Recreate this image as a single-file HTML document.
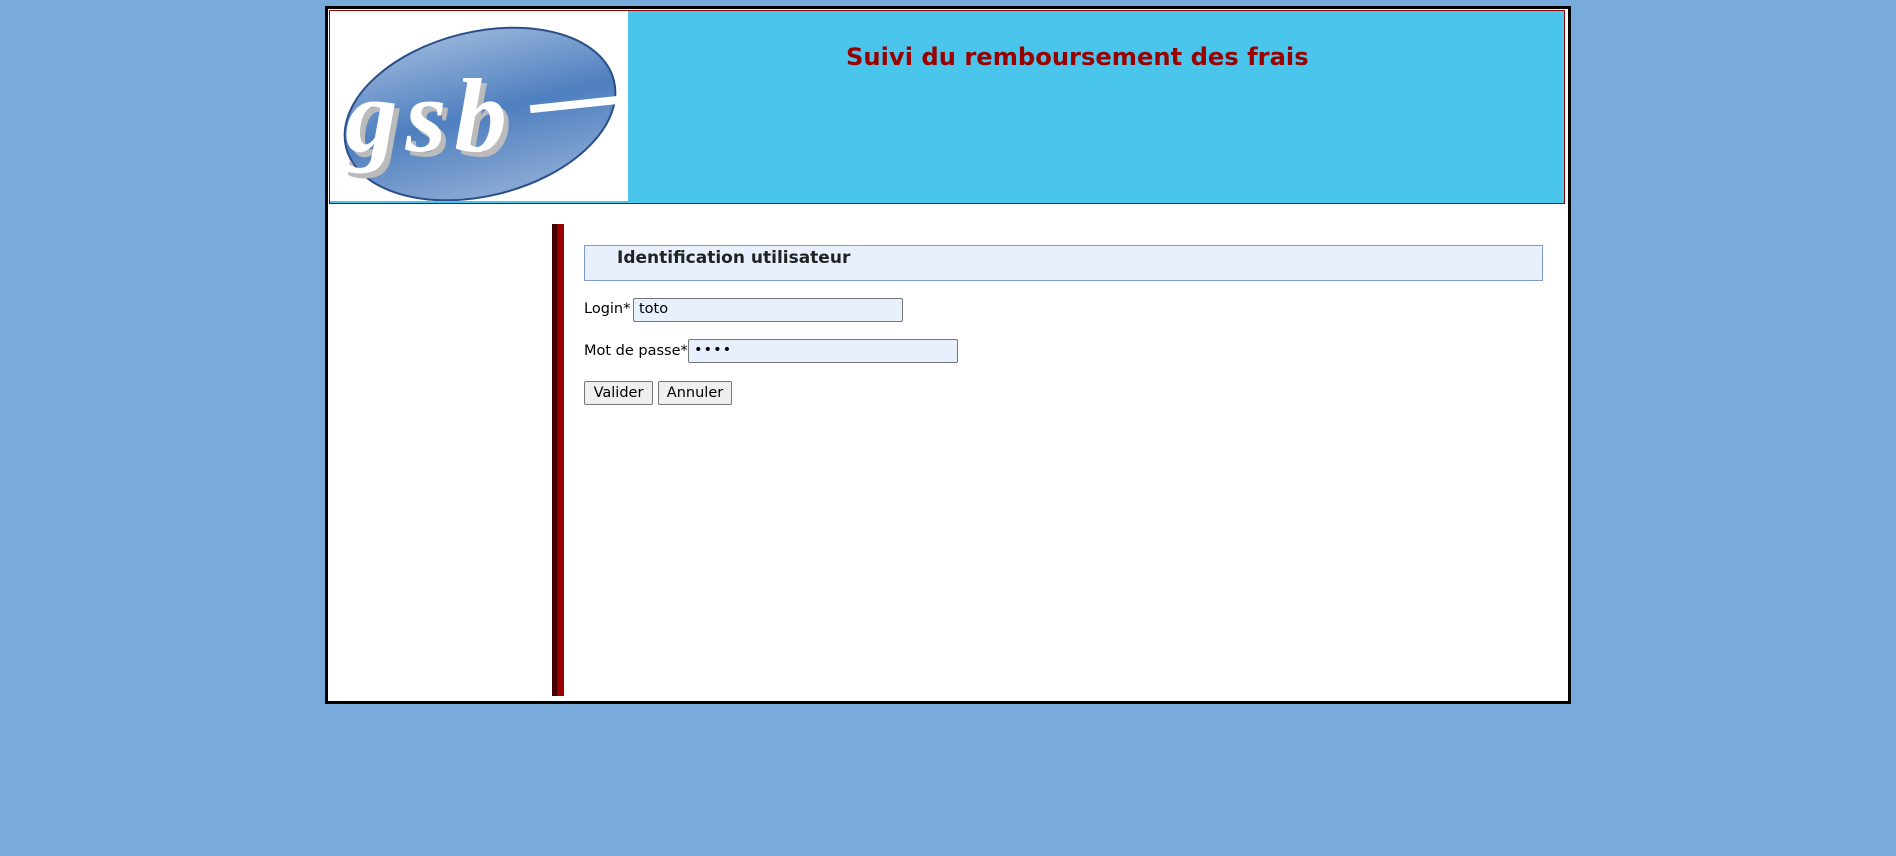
<!DOCTYPE html>
<html><head><meta charset="utf-8"><style>
html,body{margin:0;padding:0;background:#78aadc;width:1896px;height:856px;overflow:hidden;font-family:"DejaVu Sans","Liberation Sans",sans-serif;}
#outer{position:absolute;left:325px;top:6px;width:1240px;height:692px;border:3px solid #000;background:#fff;}
#head{position:absolute;left:329px;top:10px;width:1236px;height:194px;border:1px solid #900;background:#4ac5ec;box-sizing:border-box;}
#logo{position:absolute;left:330px;top:11px;width:298px;height:190px;background:#fff;}
#title{position:absolute;left:846px;top:43px;color:#990000;font-size:24.2px;white-space:nowrap;font-weight:bold;font-family:"DejaVu Sans",sans-serif;}
#bar{position:absolute;left:552px;top:224px;width:12px;height:472px;background:linear-gradient(to right,#3a0000 0,#4a0000 40%,#990000 45%,#990000 100%);}
#leg{position:absolute;left:584px;top:245px;width:959px;height:36px;box-sizing:border-box;border:1px solid #7b9ad0;background:#e8f0fd;}
#leg span{position:absolute;left:32px;top:2px;font-weight:bold;font-size:17px;color:#222;}
.lab{position:absolute;font-size:14.5px;color:#000;}
.inp{position:absolute;height:24px;box-sizing:border-box;border:1px solid #767676;border-radius:2px;background:#e8f0fe;font-size:14.5px;padding:2px 5px;}
.btn{position:absolute;height:24px;box-sizing:border-box;border:1px solid #767676;border-radius:2px;background:#efefef;font-size:14.5px;text-align:center;line-height:22px;}
</style></head><body>
<div id="outer"></div>
<div id="head"></div>
<div id="title">Suivi du remboursement des frais</div>
<div id="logo"><svg width="298" height="190" viewBox="0 0 298 190">
<defs><linearGradient id="g" x1="0" y1="0" x2="0" y2="1"><stop offset="0" stop-color="#93b2da"/><stop offset="0.5" stop-color="#4e7fbf"/><stop offset="1" stop-color="#8aa9d4"/></linearGradient></defs>
<ellipse cx="150" cy="103" rx="138" ry="82" transform="rotate(-14 150 103)" fill="url(#g)" stroke="#2a4f88" stroke-width="2"/>
<text x="20" y="145" font-family="Liberation Serif,serif" font-style="italic" font-weight="bold" font-size="105" fill="#bbb" letter-spacing="8">gsb</text>
<text x="15" y="140" font-family="Liberation Serif,serif" font-style="italic" font-weight="bold" font-size="105" fill="#fff" letter-spacing="8">gsb</text>
<rect x="200" y="90" width="96" height="8" fill="#fff" transform="rotate(-6 240 94)"/>
</svg></div>
<div id="bar"></div>
<div id="leg"><span>Identification utilisateur</span></div>
<div class="lab" style="left:584px;top:301px">Login*</div>
<div class="inp" style="left:633px;top:298px;width:270px">toto</div>
<div class="lab" style="left:584px;top:343px">Mot de passe*</div>
<div class="inp" style="left:688px;top:339px;width:270px;letter-spacing:1px">••••</div>
<div class="btn" style="left:584px;top:381px;width:69px">Valider</div>
<div class="btn" style="left:658px;top:381px;width:74px">Annuler</div>
</body></html>
